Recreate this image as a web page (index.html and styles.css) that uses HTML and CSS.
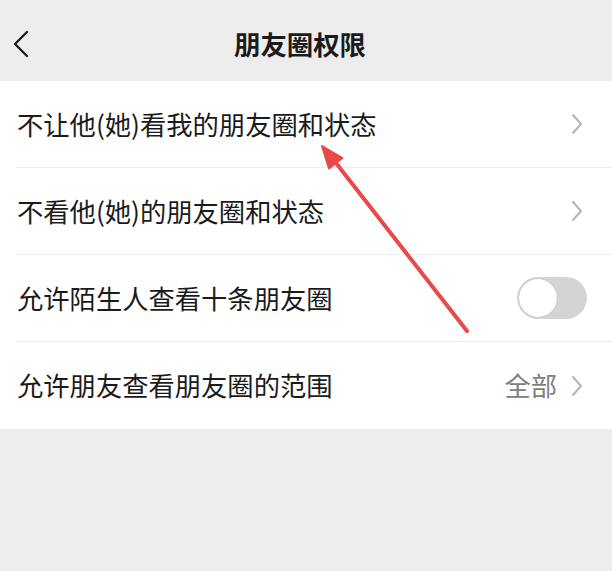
FILE: index.html
```html
<!DOCTYPE html>
<html lang="zh-CN">
<head>
  <meta charset="UTF-8">
  <title>朋友圈权限</title>
  <link rel="stylesheet" href="styles.css">
</head>
<body>

  <!-- 상단 네비게이션 -->
  <header class="nav">
    <span class="nav-back">
      <svg width="18" height="28" viewBox="0 0 18 28"><path d="M15 2 L3 14 L15 26" fill="none" stroke="#1d1d1d" stroke-width="2.4" stroke-linecap="round" stroke-linejoin="round"/></svg>
    </span>
    <h1 class="nav-title">朋友圈权限</h1>
    <span></span>
  </header>

  <!-- 설정 목록 -->
  <ul class="list">
    <li class="row">
      <span class="row-label">不让他(她)看我的朋友圈和状态</span>
      <span class="row-extra">
        <svg class="chev" width="12" height="22" viewBox="0 0 12 22"><path d="M2 2 L10 11 L2 20" fill="none" stroke="#b4b4b4" stroke-width="2" stroke-linecap="round" stroke-linejoin="round"/></svg>
      </span>
    </li>
    <li class="row">
      <span class="row-label">不看他(她)的朋友圈和状态</span>
      <span class="row-extra">
        <svg class="chev" width="12" height="22" viewBox="0 0 12 22"><path d="M2 2 L10 11 L2 20" fill="none" stroke="#b4b4b4" stroke-width="2" stroke-linecap="round" stroke-linejoin="round"/></svg>
      </span>
    </li>
    <li class="row row-switch">
      <span class="row-label">允许陌生人查看十条朋友圈</span>
      <span class="switch"><span class="switch-knob"></span></span>
    </li>
    <li class="row">
      <span class="row-label">允许朋友查看朋友圈的范围</span>
      <span class="row-extra">
        <span class="row-value">全部</span>
        <svg class="chev" width="12" height="22" viewBox="0 0 12 22"><path d="M2 2 L10 11 L2 20" fill="none" stroke="#b4b4b4" stroke-width="2" stroke-linecap="round" stroke-linejoin="round"/></svg>
      </span>
    </li>
  </ul>

  <!-- 빨간 화살표 (주석 표시) -->
  <svg class="mark" width="612" height="571" viewBox="0 0 612 571">
    <line x1="467" y1="331" x2="336" y2="163" stroke="#e84a4a" stroke-width="4" stroke-linecap="round"/>
    <polygon points="322,146 342.5,158 329,168.5" fill="#e84a4a" stroke="#e84a4a" stroke-width="2" stroke-linejoin="round"/>
  </svg>

</body>
</html>
```

FILE: styles.css
```css
/* 기본 스타일 */
body {
  margin: 0;
  width: 612px;
  height: 571px;
  background: #ededed;
  font-family: "Noto Sans CJK SC", "Noto Sans", sans-serif;
  color: #1b1b1b;
  position: relative;
  overflow: hidden;
}

/* 상단 네비게이션 */
.nav {
  height: 81px;
  display: grid;
  grid-template-columns: 1fr auto 1fr;
  align-items: center;
}
.nav-back {
  display: flex;
  align-items: center;
  padding-left: 12px;
  margin-top: 6px;
}
.nav-title {
  margin: 0 12px 0 0;
  margin-top: 6px;
  font-size: 26.4px;
  font-weight: 600;
}

/* 설정 목록 */
.list {
  list-style: none;
  margin: 0;
  padding: 0;
  background: #fff;
}
.row {
  height: 87px;
  margin-left: 16px;
  padding-left: 1px;
  padding-right: 29px;
  box-sizing: border-box;
  display: flex;
  align-items: center;
  justify-content: space-between;
  border-bottom: 1px solid #ececec;
  font-size: 26.3px;
}
.row:last-child {
  border-bottom: none;
}
.row-label {
  margin-top: -2px;
}
.row-extra {
  display: flex;
  align-items: center;
  gap: 14px;
}
.row-value {
  color: #7e7e7e;
  margin-top: -2px;
}
.chev {
  display: block;
}

/* 스위치 */
.row-switch {
  padding-right: 25px;
}
.switch {
  width: 70px;
  height: 42px;
  border-radius: 21px;
  background: #d4d4d4;
  display: flex;
  align-items: center;
  padding: 2px;
  box-sizing: border-box;
}
.switch-knob {
  width: 38px;
  height: 38px;
  border-radius: 50%;
  background: #fff;
  box-shadow: 0 0 1px rgba(0, 0, 0, 0.25);
}

/* 주석 화살표 */
.mark {
  position: absolute;
  left: 0;
  top: 0;
  pointer-events: none;
}
```
